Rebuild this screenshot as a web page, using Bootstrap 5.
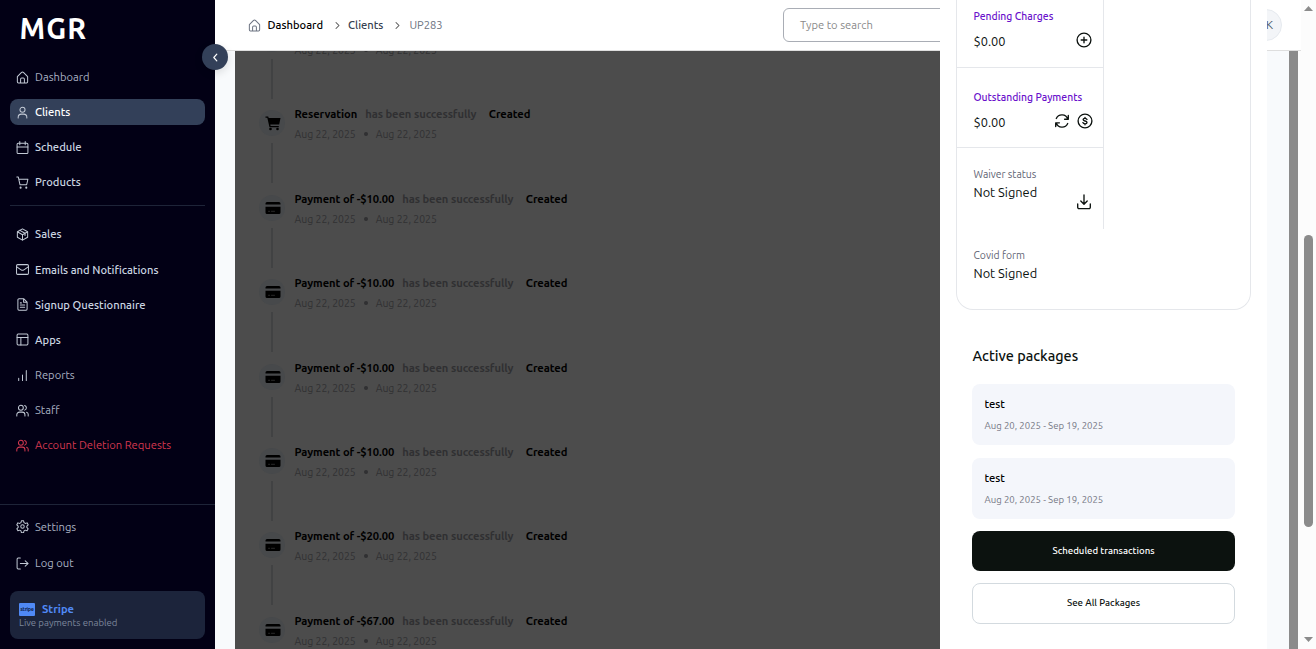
<!DOCTYPE html>
<html lang="en">
<head>
<meta charset="utf-8">
<meta name="viewport" content="width=device-width, initial-scale=1">
<title>MGR – Clients</title>
<link href="https://cdn.jsdelivr.net/npm/bootstrap@5.3.0/dist/css/bootstrap.min.css" rel="stylesheet">
<style>
body{font-family:Ubuntu,"Noto Sans",sans-serif;font-size:11.2px;line-height:16px;color:#0c120f;background:#f8fafc}
svg{fill:none;stroke:currentColor;stroke-width:1.85;stroke-linecap:round;stroke-linejoin:round;flex:none;display:block}
.i13{width:13px;height:13px}
.i16{width:16px;height:16px}
.thin{stroke-width:1.35}
.med{font-weight:500}
.sidebar{width:215px;background:#020015;z-index:5}
.logo{font-size:28.8px;line-height:36px;font-weight:600;letter-spacing:1.1px;color:#fff;padding:10px 0 0 19.5px;height:64px}
.side-list{padding:0 10px}
.side-link{height:26px;margin-bottom:9.15px;padding:0 6px;gap:6px;border-radius:8px;color:#cbd5e1;text-decoration:none}
.side-link.dim{color:#a9b1c2}
.side-link svg{color:#c3cad6}
.side-link.on{background:#334059;color:#fff}
.side-link.danger,.side-link.danger svg{color:#d43850}
.rule{border-top:1px solid #1e2438}
.rule.mid{margin-bottom:15.5px}
.side-link.sales{margin-bottom:9.6px}
.side-foot{padding-top:9px}
.side-foot .side-link{margin-bottom:10.15px}
.side-foot .side-link:last-child{margin-bottom:0}
.stripe-box{height:48px;margin:15px 10px 10px;border-radius:8px;background:#1c243b;padding:10px 9px 0}
.stripe-logo{width:16px;height:13px;margin-right:7px;background:#5089f5;color:#10254f;font-size:5.5px;line-height:12px;letter-spacing:-.3px;border-radius:1px}
.stripe-name{color:#5089f5;font-size:11.2px;font-weight:600}
.stripe-note{color:#7c879b;font-size:9.6px;line-height:12px}
.collapse-btn{width:26px;height:26px;left:202px;top:44px;background:#334059;color:#fff;z-index:8;box-shadow:0 3px 8px rgba(0,0,0,.12)}
.topbar{height:51px;background:#fff;border-bottom:1px solid #dedede;padding-left:33px}
.search{left:568px;top:8px;width:300px;height:34px;border:1px solid #a9adb5;border-radius:6px;color:#8a8a8a;padding:0 16px}
.avatar{left:1035px;top:9px;width:32px;height:32px;background:#f3f5f8;border:1px solid #e6eaef;color:#475569;padding-right:8px;font-size:12px}
.crumb-home{color:#6b7280;margin-right:6.5px}
.crumb-mid{color:#374151}
.crumb-end{color:#6b7280}
.crumb-sep{width:9px;height:9px;color:#555;margin:0 6.500px 0 9.500px}
.crumb-sep.last{margin-right:7.500px}
.dimmed{margin:0 22px 0 20px;width:1032px;background:#4c4c4c;padding-left:24px}
.gutter{width:9px;background:#8b8b8b}
.gutter-end{width:3px;background:#fcfcfc}
.timeline{margin-top:-25px}
.event{height:84.42px;gap:9.5px}
.event-rail{width:26px}
.event-icon{width:26px;height:26px;background:#47494b;color:#000;padding-left:1px}
.event-line{width:2px;height:40px;margin-top:7px;background:#414243}
.event-title{margin-top:-4px;color:#000;font-weight:600;letter-spacing:-.065px}
.event-title .verb{color:#303032;margin:0 12.5px 0 8px}
.event-date{color:#313133;margin-top:4px;font-size:10.4px}
.dot{width:4px;height:4px;background:#303032;margin:0 8px}
.drawer{left:940px;top:0;width:327px;height:649px;background:#fff;z-index:10;padding:0 16px}
.info{width:295px;height:310px;border:1px solid #e5e7eb;border-top:0;border-radius:0 0 17px 17px}
.info-cell{width:147px;height:80px;border-right:1px solid #e5e7eb;border-bottom:1px solid #e5e7eb;padding:21px 11px 0 16.5px}
.info-cell.first{height:68px;padding-top:8px}
.info-cell.pay{padding-right:10px}
.info-cell.open{height:81px;border-bottom:0;padding-top:18px}
.info-cell.bare{border:0;padding-top:18px}
.tag{color:#6a11cb;font-size:10.4px;line-height:16px}
.tag.grey{color:#5f6474}
.amount{font-size:12.8px;line-height:18px;margin-top:8px}
.status{font-size:12.8px;line-height:18px;margin-top:1px}
.sync{margin-right:7px}
.dl{margin-top:-7px}
.section-title{font-size:14.4px;line-height:20px;margin:36px 0 18px 16.5px}
.pkg{height:61px;margin:0 16px 13px;padding:12px 12.5px;border-radius:8px;background:#f4f6fb}
.pkg-date{font-size:9.6px;line-height:14px;color:#747684;margin-top:7px}
.wide{width:263px;height:40px;margin:0 16px 12px;border-radius:8px;font-size:9.6px}
.wide.solid{background:#0c120f;color:#fff;margin-top:-1px}
.wide.line{height:41px;border:1px solid #d3dadf;background:#fff;color:#0c120f;padding-bottom:7px}
.scrollbar{width:15px;background:#fcfcfc}
.arrow{width:9px;height:5px;background:#8b8b8b;clip-path:polygon(50% 0,100% 100%,0 100%);margin:6px 0 0 3px}
.arrow.down{clip-path:polygon(0 0,100% 0,50% 100%);margin:auto 0 7px 3px}
.thumb{width:9px;height:292px;border-radius:5px;background:#8b8b8b;margin:224px 0 0 3px}
</style>
</head>
<body class="vh-100 overflow-hidden">
<svg width="0" height="0" class="position-absolute">
<symbol id="home" viewBox="0 0 24 24"><path d="M2.500 10.500 9.800 3a3.200 3.200 0 0 1 4.400 0l7.300 7.500V20a2 2 0 0 1-2 2h-15a2 2 0 0 1-2-2zM8.500 22v-7a2 2 0 0 1 2-2h3a2 2 0 0 1 2 2v7"/></symbol>
<symbol id="user" viewBox="0 0 24 24"><circle cx="12" cy="7" r="4.700"/><path d="M4 22v-1a6 6 0 0 1 6-6h4a6 6 0 0 1 6 6v1"/></symbol>
<symbol id="cal" viewBox="0 0 24 24"><rect x="2" y="4" width="20" height="19" rx="2"/><path d="M7 1v6M17 1v6M2 11h20"/></symbol>
<symbol id="cart" viewBox="0 0 24 24"><circle cx="8.500" cy="21.500" r="1"/><circle cx="19" cy="21.500" r="1"/><path d="M1.500 2h2.800l3 14h12.400L22 6H5.200"/></symbol>
<symbol id="box" viewBox="0 0 24 24"><path d="M12 1.500 21.500 7v10L12 22.500 2.500 17V7zM2.500 7 12 12.500 21.500 7M12 12.500v10M7 4.300l9.700 5.500v4"/></symbol>
<symbol id="mail" viewBox="0 0 24 24"><rect x="1" y="3" width="22" height="18" rx="2"/><path d="m1.500 7 8.500 6a4 4 0 0 0 4 0l8.500-6"/></symbol>
<symbol id="file" viewBox="0 0 24 24"><path d="M14.500 1.500H5.500a2 2 0 0 0-2 2v17a2 2 0 0 0 2 2h13a2 2 0 0 0 2-2v-13zM14 2v6h6M8 9h2M8 13h8M8 17h8"/></symbol>
<symbol id="layout" viewBox="0 0 24 24"><rect x="2" y="2" width="20" height="20" rx="2"/><path d="M2 8.500h20M9 22V8.500"/></symbol>
<symbol id="bars" viewBox="0 0 24 24"><path d="M5 21v-4M12 21V11M19 21V3"/></symbol>
<symbol id="users" viewBox="0 0 24 24"><circle cx="9" cy="7" r="4.500"/><path d="M1.500 22v-2a5 5 0 0 1 5-5h5a5 5 0 0 1 5 5v2M16 2.700a4.500 4.500 0 0 1 0 8.600M22.500 22v-3a4 4 0 0 0-3-3.900"/></symbol>
<symbol id="gear" viewBox="0 0 24 24"><path d="M10 1.500h4l.8 3.400 2.400 1.400 3.300-1 2 3.500-2.500 2.400v2.600l2.500 2.400-2 3.500-3.300-1-2.400 1.400-.8 3.400h-4l-.8-3.400-2.400-1.400-3.300 1-2-3.500L4 13.800v-2.600L1.500 8.800l2-3.500 3.300 1 2.400-1.400z"/><circle cx="12" cy="12" r="3.200"/></symbol>
<symbol id="logout" viewBox="0 0 24 24"><path d="M8 22H4a2 2 0 0 1-2-2V4a2 2 0 0 1 2-2h4M17 17l5.500-5L17 7M22 12H8"/></symbol>
<symbol id="chev" viewBox="0 0 24 24"><path stroke-width="2.800" d="m8 4 8 8-8 8"/></symbol>
<symbol id="cartfill" viewBox="0 0 16 16"><path fill="currentColor" stroke="none" d="M.5 1.500h2.700l.5 1.500H15.500l-1.300 6.500H5.300l.3 1.500h8.200v1.300H4.500L2.300 2.800H.5z"/><circle cx="5.500" cy="14" r="1.300" fill="currentColor" stroke="none"/><circle cx="12.500" cy="14" r="1.300" fill="currentColor" stroke="none"/></symbol>
<symbol id="card" viewBox="0 0 16 16"><path fill="currentColor" stroke="none" d="M2 2h12a1.500 1.500 0 0 1 1.500 1.500v1H.5v-1A1.500 1.500 0 0 1 2 2zM.5 6.800h15v5.700A1.500 1.500 0 0 1 14 14H2a1.500 1.500 0 0 1-1.500-1.500z"/><path stroke="#333" stroke-width=".8" d="M3.500 11.300h1.200M6.500 11.300h3"/></symbol>
<symbol id="plus" viewBox="0 0 16 16"><circle cx="8" cy="8" r="6.900"/><path d="M8 5.200v5.600M5.200 8h5.600"/></symbol>
<symbol id="dollar" viewBox="0 0 16 16"><circle cx="8" cy="8" r="6.900"/><path d="M10 6.400C9.700 5.700 9 5.300 8 5.300c-1.100 0-1.900.5-1.900 1.300C6.100 8.600 10 7.400 10 9.500c0 .8-.8 1.300-2 1.300-1.100 0-1.800-.4-2.100-1.200M8 4.300v1M8 10.800v1"/></symbol>
<symbol id="sync" viewBox="0 0 16 16"><path d="M14.300 2.500v3.700h-3.700M13.800 6A6.200 6.200 0 0 0 2.300 5.500M1.700 13.500V9.800h3.700M2.200 10A6.200 6.200 0 0 0 13.700 10.500"/></symbol>
<symbol id="down" viewBox="0 0 16 16"><path d="M8 1v9M4.800 7 8 10.200 11.200 7M1.700 10v3.300a1.300 1.300 0 0 0 1.300 1.300h10a1.300 1.300 0 0 0 1.300-1.300V10"/></symbol>
</svg>

<div class="d-flex h-100 position-relative">
  <aside class="sidebar d-flex flex-column flex-shrink-0">
    <div class="logo">MGR</div>
    <nav class="side-list">
      <a class="side-link dim d-flex align-items-center"><svg class="i13"><use href="#home"/></svg>Dashboard</a>
      <a class="side-link on med d-flex align-items-center"><svg class="i13"><use href="#user"/></svg>Clients</a>
      <a class="side-link med d-flex align-items-center"><svg class="i13"><use href="#cal"/></svg>Schedule</a>
      <a class="side-link med d-flex align-items-center"><svg class="i13"><use href="#cart"/></svg>Products</a>
      <div class="rule mid"></div>
      <a class="side-link sales med d-flex align-items-center"><svg class="i13"><use href="#box"/></svg>Sales</a>
      <a class="side-link med d-flex align-items-center"><svg class="i13"><use href="#mail"/></svg>Emails and Notifications</a>
      <a class="side-link med d-flex align-items-center"><svg class="i13"><use href="#file"/></svg>Signup Questionnaire</a>
      <a class="side-link med d-flex align-items-center"><svg class="i13"><use href="#layout"/></svg>Apps</a>
      <a class="side-link dim d-flex align-items-center"><svg class="i13"><use href="#bars"/></svg>Reports</a>
      <a class="side-link dim d-flex align-items-center"><svg class="i13"><use href="#users"/></svg>Staff</a>
      <a class="side-link danger d-flex align-items-center"><svg class="i13"><use href="#users"/></svg>Account Deletion Requests</a>
    </nav>
    <div class="mt-auto rule">
      <div class="side-list side-foot">
        <a class="side-link dim d-flex align-items-center"><svg class="i13"><use href="#gear"/></svg>Settings</a>
        <a class="side-link dim d-flex align-items-center"><svg class="i13"><use href="#logout"/></svg>Log out</a>
      </div>
      <div class="stripe-box">
        <div class="d-flex align-items-center"><span class="stripe-logo text-center fw-bold">stripe</span><span class="stripe-name">Stripe</span></div>
        <div class="stripe-note">Live payments enabled</div>
      </div>
    </div>
  </aside>
  <button class="collapse-btn btn p-0 border-0 rounded-circle position-absolute d-flex align-items-center justify-content-center"><svg width="9" height="9" viewBox="0 0 24 24"><path stroke-width="3.200" d="m15.500 3-8 9 8 9"/></svg></button>

  <main class="flex-grow-1 d-flex flex-column position-relative">
    <header class="topbar d-flex align-items-center flex-shrink-0">
      <svg class="i13 crumb-home"><use href="#home"/></svg>
      <span class="med text-black">Dashboard</span>
      <svg class="crumb-sep"><use href="#chev"/></svg>
      <span class="crumb-mid med">Clients</span>
      <svg class="crumb-sep last"><use href="#chev"/></svg>
      <span class="crumb-end">UP283</span>
      <div class="search position-absolute d-flex align-items-center">Type to search</div>
      <div class="avatar position-absolute rounded-circle d-flex align-items-center justify-content-end">K</div>
    </header>
    <div class="flex-grow-1 d-flex overflow-hidden">
      <section class="dimmed overflow-hidden flex-shrink-1">
        <div class="timeline">
          <div class="event d-flex"><div class="event-rail d-flex flex-column align-items-center"><span class="event-icon rounded-circle d-flex align-items-center justify-content-center"><svg class="i16"><use href="#card"/></svg></span><span class="event-line"></span></div><div><div class="event-title">&nbsp;</div><div class="event-date d-flex align-items-center">Aug 22, 2025<i class="dot rounded-circle"></i>Aug 22, 2025</div></div></div>
          <div class="event d-flex"><div class="event-rail d-flex flex-column align-items-center"><span class="event-icon rounded-circle d-flex align-items-center justify-content-center"><svg class="i16"><use href="#cartfill"/></svg></span><span class="event-line"></span></div><div><div class="event-title">Reservation<span class="verb">has been successfully</span>Created</div><div class="event-date d-flex align-items-center">Aug 22, 2025<i class="dot rounded-circle"></i>Aug 22, 2025</div></div></div>
          <div class="event d-flex"><div class="event-rail d-flex flex-column align-items-center"><span class="event-icon rounded-circle d-flex align-items-center justify-content-center"><svg class="i16"><use href="#card"/></svg></span><span class="event-line"></span></div><div><div class="event-title">Payment of -$10.00<span class="verb">has been successfully</span>Created</div><div class="event-date d-flex align-items-center">Aug 22, 2025<i class="dot rounded-circle"></i>Aug 22, 2025</div></div></div>
          <div class="event d-flex"><div class="event-rail d-flex flex-column align-items-center"><span class="event-icon rounded-circle d-flex align-items-center justify-content-center"><svg class="i16"><use href="#card"/></svg></span><span class="event-line"></span></div><div><div class="event-title">Payment of -$10.00<span class="verb">has been successfully</span>Created</div><div class="event-date d-flex align-items-center">Aug 22, 2025<i class="dot rounded-circle"></i>Aug 22, 2025</div></div></div>
          <div class="event d-flex"><div class="event-rail d-flex flex-column align-items-center"><span class="event-icon rounded-circle d-flex align-items-center justify-content-center"><svg class="i16"><use href="#card"/></svg></span><span class="event-line"></span></div><div><div class="event-title">Payment of -$10.00<span class="verb">has been successfully</span>Created</div><div class="event-date d-flex align-items-center">Aug 22, 2025<i class="dot rounded-circle"></i>Aug 22, 2025</div></div></div>
          <div class="event d-flex"><div class="event-rail d-flex flex-column align-items-center"><span class="event-icon rounded-circle d-flex align-items-center justify-content-center"><svg class="i16"><use href="#card"/></svg></span><span class="event-line"></span></div><div><div class="event-title">Payment of -$10.00<span class="verb">has been successfully</span>Created</div><div class="event-date d-flex align-items-center">Aug 22, 2025<i class="dot rounded-circle"></i>Aug 22, 2025</div></div></div>
          <div class="event d-flex"><div class="event-rail d-flex flex-column align-items-center"><span class="event-icon rounded-circle d-flex align-items-center justify-content-center"><svg class="i16"><use href="#card"/></svg></span><span class="event-line"></span></div><div><div class="event-title">Payment of -$20.00<span class="verb">has been successfully</span>Created</div><div class="event-date d-flex align-items-center">Aug 22, 2025<i class="dot rounded-circle"></i>Aug 22, 2025</div></div></div>
          <div class="event d-flex"><div class="event-rail d-flex flex-column align-items-center"><span class="event-icon rounded-circle d-flex align-items-center justify-content-center"><svg class="i16"><use href="#card"/></svg></span></div><div><div class="event-title">Payment of -$67.00<span class="verb">has been successfully</span>Created</div><div class="event-date d-flex align-items-center">Aug 22, 2025<i class="dot rounded-circle"></i>Aug 22, 2025</div></div></div>
        </div>
      </section>
      <div class="gutter flex-shrink-0"></div>
      <div class="gutter-end flex-shrink-0"></div>
    </div>
  </main>

  <section class="drawer position-absolute">
    <div class="info">
      <div class="info-cell first">
        <div class="tag med">Pending Charges</div>
        <div class="d-flex justify-content-between"><span class="amount">$0.00</span><svg class="i16 thin mt-2"><use href="#plus"/></svg></div>
      </div>
      <div class="info-cell pay">
        <div class="tag med">Outstanding Payments</div>
        <div class="d-flex"><span class="amount me-auto">$0.00</span><svg class="i16 thin mt-2 sync"><use href="#sync"/></svg><svg class="i16 thin mt-2"><use href="#dollar"/></svg></div>
      </div>
      <div class="info-cell open">
        <div class="tag grey">Waiver status</div>
        <div class="status">Not Signed</div>
        <svg class="i16 thin ms-auto dl"><use href="#down"/></svg>
      </div>
      <div class="info-cell bare">
        <div class="tag grey">Covid form</div>
        <div class="status">Not Signed</div>
      </div>
    </div>
    <h2 class="section-title med">Active packages</h2>
    <div class="pkg"><div class="med text-black">test</div><div class="pkg-date">Aug 20, 2025 - Sep 19, 2025</div></div>
    <div class="pkg"><div class="med text-black">test</div><div class="pkg-date">Aug 20, 2025 - Sep 19, 2025</div></div>
    <button class="wide solid btn med d-flex align-items-center justify-content-center p-0 border-0">Scheduled transactions</button>
    <button class="wide line btn med d-flex align-items-center justify-content-center">See All Packages</button>
  </section>

  <div class="scrollbar flex-shrink-0 d-flex flex-column">
    <div class="arrow"></div>
    <div class="thumb"></div>
    <div class="arrow down"></div>
  </div>
</div>
<script src="https://cdn.jsdelivr.net/npm/bootstrap@5.3.0/dist/js/bootstrap.bundle.min.js"></script>
</body>
</html>
